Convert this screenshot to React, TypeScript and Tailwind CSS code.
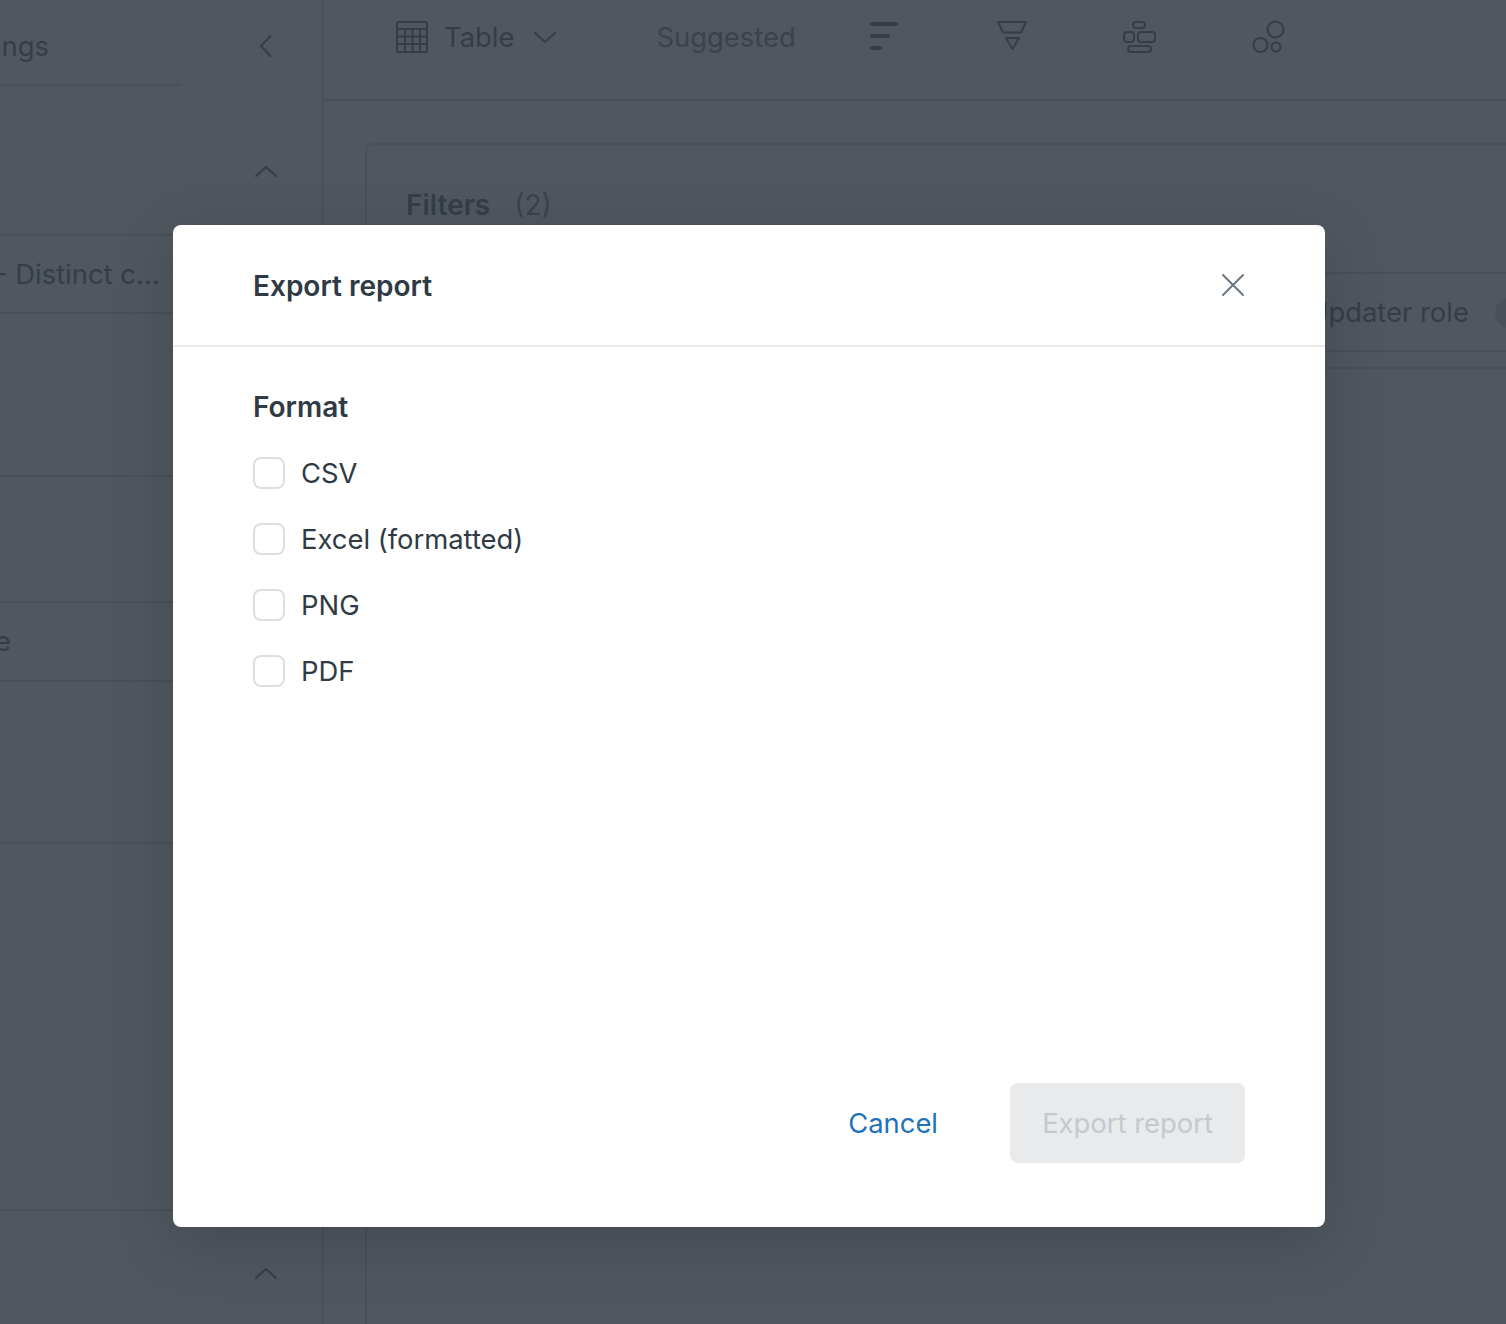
import React from "react"

const INK = "#353d47"

function TableIcon() {
  return (
    <svg width="32" height="32" viewBox="0 0 32 32" fill="none" stroke={INK} strokeWidth="2">
      <rect x="1" y="1" width="30" height="30" rx="1.5" />
      <path d="M1 8h30M1 15.5h30M1 23h30M9 8v23M16.5 8v23M24 8v23" />
    </svg>
  )
}

function Chevron({ d, w, h }: { d: string; w: number; h: number }) {
  return (
    <svg width={w} height={h} viewBox={`0 0 ${w} ${h}`} fill="none" stroke={INK} strokeWidth="2" strokeLinecap="round" strokeLinejoin="round">
      <path d={d} />
    </svg>
  )
}

function SortIcon() {
  return (
    <svg width="28" height="30" viewBox="0 0 28 30" fill={INK}>
      <rect x="0" y="1" width="28" height="4" rx="2" />
      <rect x="0" y="13" width="20" height="4" rx="2" />
      <rect x="0" y="25" width="12" height="4" rx="2" />
    </svg>
  )
}

function FunnelIcon() {
  return (
    <svg width="30" height="30" viewBox="0 0 30 30" fill="none" stroke={INK} strokeWidth="2" strokeLinejoin="round">
      <path d="M1 1h28l-5 10.5H6z" />
      <path d="M9 17h13l-6.500 11z" />
    </svg>
  )
}

function GroupIcon() {
  return (
    <svg width="34" height="32" viewBox="0 0 34 32" fill="none" stroke={INK} strokeWidth="2">
      <rect x="10" y="1" width="12" height="6" rx="3" />
      <rect x="1" y="11" width="10" height="10" rx="3" />
      <rect x="15" y="11" width="17" height="10" rx="3" />
      <rect x="5" y="25" width="23" height="6" rx="3" />
    </svg>
  )
}

function BubblesIcon() {
  return (
    <svg width="34" height="34" viewBox="0 0 34 34" fill="none" stroke={INK} strokeWidth="2">
      <circle cx="23.500" cy="9.500" r="8" />
      <circle cx="8.500" cy="25" r="7" />
      <circle cx="24" cy="27" r="4.500" />
    </svg>
  )
}

function Sidebar() {
  return (
    <aside className="w-[324px] shrink-0 border-r-2 border-[#4a5058] text-[27.4px] text-[#353d47]">
      <div className="flex h-[86px]">
        <div className="w-[181px] h-[86px] border-b-2 border-[#4a5058] flex items-center pt-[9px]">
          <div className="w-[49px] flex justify-end overflow-hidden whitespace-nowrap">Settings</div>
        </div>
        <div className="ml-[79px] pt-[35px]">
          <Chevron d="M10.500 1 1 11l9.500 10" w={12} h={22} />
        </div>
      </div>
      <div className="h-[150px] border-b-2 border-[#4a5058] flex justify-center pl-[210px] pt-[80px]">
        <Chevron d="M1 10 11 1l10 9" w={22} h={11} />
      </div>
      <div className="h-[78px] border-b-2 border-[#4a5058] flex items-center whitespace-nowrap pt-[2px]">
        <span className="-ml-[5px]">- Distinct c...</span>
      </div>
      <div className="h-[163px] border-b-2 border-[#4a5058]" />
      <div className="h-[126px] border-b-2 border-[#4a5058]" />
      <div className="h-[79px] border-b-2 border-[#4a5058] flex items-center">
        <div className="w-[11px] flex justify-end overflow-hidden whitespace-nowrap">Name</div>
      </div>
      <div className="h-[162px] border-b-2 border-[#4a5058]" />
      <div className="h-[367px] border-b-2 border-[#4a5058]" />
      <div className="flex justify-center pl-[210px] pt-[57px]">
        <Chevron d="M1 10 11 1l10 9" w={22} h={11} />
      </div>
    </aside>
  )
}

function Toolbar() {
  return (
    <div className="h-[101px] border-b-2 border-[#4a5058] flex items-start text-[27.4px] text-[#353d47]">
      <div className="ml-[72px] mt-[21px]">
        <TableIcon />
      </div>
      <span className="ml-[16px] mt-[20px] leading-[34px]">Table</span>
      <div className="ml-[20px] mt-[32px]">
        <Chevron d="M1 1l10 9 10-9" w={22} h={11} />
      </div>
      <span className="ml-[100px] mt-[20px] leading-[34px] text-[#3b424c]">Suggested</span>
      <div className="ml-[74px] mt-[21px]">
        <SortIcon />
      </div>
      <div className="ml-[99px] mt-[21px]">
        <FunnelIcon />
      </div>
      <div className="ml-[96px] mt-[21px]">
        <GroupIcon />
      </div>
      <div className="ml-[95px] mt-[20px]">
        <BubblesIcon />
      </div>
    </div>
  )
}

function FiltersCard() {
  return (
    <div className="ml-[41px] mt-[42px] w-[1300px] h-[1300px] rounded-t-lg border-2 border-[#4a5058] text-[27.4px] text-[#353d47]">
      <div className="h-[129px] border-b-2 border-[#4a5058] pl-[39px] pt-[43px] flex gap-[24px] leading-[34px]">
        <span className="font-semibold text-[28px]">Filters</span>
        <span className="text-[#3b424c] text-[28px]">(2)</span>
      </div>
      <div className="h-[78px] border-b-2 border-[#4a5058] flex items-center whitespace-nowrap pl-[941px] pt-[1px]">
        <span>Updater role</span>
        <span className="ml-[26px] w-[30px] h-[30px] rounded-full bg-[#4a5058]" />
      </div>
      <div className="h-[17px] border-b-2 border-[#4a5058]" />
    </div>
  )
}

function ExportDialog() {
  const formats = ["CSV", "Excel (formatted)", "PNG", "PDF"]

  return (
    <div className="absolute left-[173px] top-[225px] w-[1152px] h-[1002px] rounded-lg bg-white flex flex-col text-[#2f3a45] shadow-[0_16px_64px_rgba(0,0,0,0.16)]">
      <div className="h-[122px] shrink-0 border-b-2 border-[#ebebec] px-[80px] flex items-center justify-between">
        <h2 className="text-[28px] font-semibold pt-[1px]">Export report</h2>
        <svg width="24" height="24" viewBox="0 0 24 24" fill="none" stroke="#6d7780" strokeWidth="2" strokeLinecap="round">
          <path d="M2 2l20 20M22 2 2 22" />
        </svg>
      </div>
      <div className="flex-1 px-[80px] pt-[40px]">
        <h3 className="text-[28px] font-semibold leading-[40px]">Format</h3>
        <div className="mt-[30px] flex flex-col gap-[34px]">
          {formats.map((format) => (
            <label key={format} className="flex items-center gap-[16px] h-[32px] text-[27.4px]">
              <span className="w-[32px] h-[32px] rounded-lg border-2 border-[#dcdfe2] bg-white" />
              <span className="pt-[2px]">{format}</span>
            </label>
          ))}
        </div>
      </div>
      <div className="flex items-center justify-end px-[80px] pb-[64px] gap-[72px]">
        <button className="text-[27.4px] text-[#1f72b8] pt-[1px]">Cancel</button>
        <button disabled className="w-[235px] h-[80px] rounded-lg bg-[#e9eaec] text-[27.4px] text-[#c4c9ce] pt-[1px]">
          Export report
        </button>
      </div>
    </div>
  )
}

export default function App() {
  return (
    <div className="relative w-[1506px] h-[1324px] overflow-hidden bg-[#50575f] font-['Inter',sans-serif]">
      <div className="flex h-full">
        <Sidebar />
        <main className="flex-1 min-w-0">
          <Toolbar />
          <FiltersCard />
        </main>
      </div>
      <ExportDialog />
    </div>
  )
}
